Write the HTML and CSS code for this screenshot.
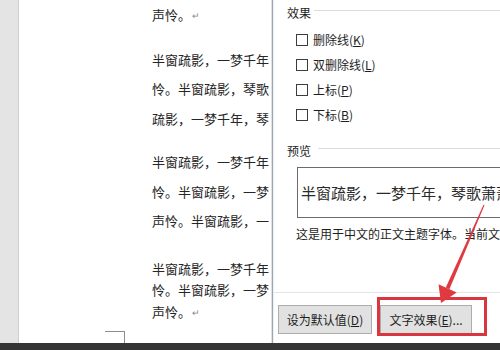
FILE: index.html
```html
<!DOCTYPE html>
<html lang="zh-CN">
<head>
  <meta charset="UTF-8">
  <title>字体 – 文字效果</title>
  <link rel="stylesheet" href="styles.css">
</head>
<body>
  <div class="screen">
    <div class="workspace">
      <div class="gutter"></div>
      <div class="page">
        <p class="para">声怜。<span class="ret">↵</span></p>
        <p class="para">半窗疏影，一梦千年<br>怜。半窗疏影，琴歌<br>疏影，一梦千年，琴</p>
        <p class="para">半窗疏影，一梦千年<br>怜。半窗疏影，一梦<br>声怜。半窗疏影，一</p>
        <p class="para tight">半窗疏影，一梦千年<br>怜。半窗疏影，一梦<br>声怜。<span class="ret">↵</span></p>
        <div class="corner"></div>
      </div>
      <div class="dialog">
        <div class="group-title"><span>效果</span><i></i></div>
        <ul class="checks">
          <li><span class="box"></span>删除线(<u>K</u>)</li>
          <li><span class="box"></span>双删除线(<u>L</u>)</li>
          <li><span class="box"></span>上标(<u>P</u>)</li>
          <li><span class="box"></span>下标(<u>B</u>)</li>
        </ul>
        <div class="group-title preview-title"><span>预览</span><i></i></div>
        <div class="preview">半窗疏影，一梦千年，琴歌萧萧</div>
        <p class="note">这是用于中文的正文主题字体。当前文档主题定义将使用哪种字体。</p>
        <div class="actions">
          <button class="btn">设为默认值(<u>D</u>)</button>
          <button class="btn effects">文字效果(<u>E</u>)...</button>
        </div>
      </div>
    </div>
    <div class="taskbar"></div>
    <!-- annotation on top of the screenshot -->
    <svg class="markup" width="500" height="350" viewBox="0 0 500 350">
      <rect x="378.5" y="298.5" width="107" height="36" fill="none" stroke="#d8373f" stroke-width="3"/>
      <polygon points="483.5,204.8 484.5,205.2 449.4,289.2 445.8,287.6" fill="#e0393f"/>
      <polygon points="438.5,284.3 456.7,292.5 441,303" fill="#e0393f"/>
    </svg>
  </div>
</body>
</html>
```

FILE: styles.css
```css
:root {
  --text: #1e1e1e;
  --line: #dcdcdc;
  --btn: #e1e1e1;
  --btn-border: #adadad;
  --cjk: "Noto Sans CJK SC", "Noto Sans", sans-serif;
}
* { box-sizing: border-box; margin: 0; padding: 0; }
body { background: #fff; font-family: var(--cjk); color: var(--text); }

.screen { position: relative; width: 500px; height: 350px; overflow: hidden; display: flex; flex-direction: column; }
.workspace { display: flex; height: 343px; }
.taskbar { height: 7px; background: #353535; }

.gutter { width: 19px; background: #e4e4e4; border-right: 1px solid #cfcfcf; }
.page { width: 253px; padding-left: 133px; overflow: hidden; background: #fff; border-right: 1px solid #e2e2e2; }
.para { font-size: 13px; line-height: 29.5px; white-space: nowrap; margin-top: 14px; color: #262626; }
.para:first-child { margin-top: 0; }
.para.tight { line-height: 21.5px; margin-top: 22px; }
.ret { font-size: 9px; color: #8a8a8a; margin-left: 1px; vertical-align: 1px; }
.corner { width: 20px; height: 14px; margin: 8px 0 0 -47px; border-top: 1px solid #8c8c8c; border-right: 1px solid #8c8c8c; }

.dialog {
  flex: 1;
  display: flex;
  flex-direction: column;
  padding-left: 14px;
  border-left: 1px solid #9aa6b3;
  box-shadow: inset 1px 0 0 #eef1f4;
  overflow: hidden;
  background: #fff;
}
.group-title { display: flex; align-items: center; gap: 3px; height: 24px; font-size: 12px; }
.group-title span { white-space: nowrap; }
.group-title i { flex: 1; height: 1px; background: var(--line); margin-top: -3px; }
.preview-title { margin-top: 11px; }
.preview-title i { margin-left: 4px; }

.checks { list-style: none; margin: 3px 0 0 9px; }
.checks li { display: flex; align-items: center; height: 25px; font-size: 12px; white-space: nowrap; }
.box { width: 12px; height: 12px; border: 1px solid #3c3c3c; background: #fff; margin-right: 5px; }

.preview {
  margin: 5px -4px 0 10px;
  height: 51px;
  padding-left: 3px;
  border: 1px solid #6b6b6b;
  border-right: none;
  font-size: 15px;
  line-height: 49px;
  white-space: nowrap;
  overflow: hidden;
  color: #2a2a2a;
}
.note { margin: 7px 0 0 9px; font-size: 12px; line-height: 18px; white-space: nowrap; }

.actions {
  margin: auto 0 0 -14px;
  padding: 12px 0 9px 5px;
  border-top: 1px solid #e6e6e6;
  display: flex;
  gap: 8px;
}
.btn {
  height: 29px;
  width: 94px;
  background: var(--btn);
  border: 1px solid var(--btn-border);
  font-family: var(--cjk);
  font-size: 12px;
  color: var(--text);
}
.btn.effects { width: 92px; }

.markup { position: absolute; left: 0; top: 0; pointer-events: none; }
```
